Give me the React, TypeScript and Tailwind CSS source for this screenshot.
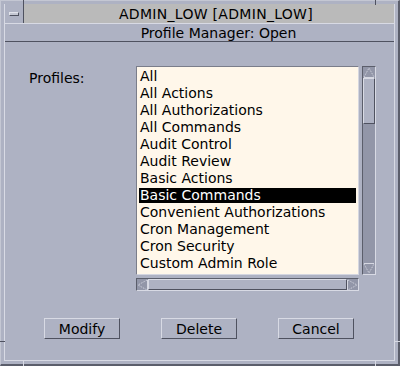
const profiles = [
  "All",
  "All Actions",
  "All Authorizations",
  "All Commands",
  "Audit Control",
  "Audit Review",
  "Basic Actions",
  "Basic Commands",
  "Convenient Authorizations",
  "Cron Management",
  "Cron Security",
  "Custom Admin Role",
];

const selected = "Basic Commands";

function ArrowUp() {
  return (
    <svg width="12" height="11" viewBox="0 0 12 11" className="block">
      <polyline points="1,10 6,1 11,10" fill="none" stroke="#d6d8e2" strokeWidth="1" strokeDasharray="1 1" />
      <line x1="1" y1="10.5" x2="11" y2="10.5" stroke="#d6d8e2" strokeWidth="1" />
    </svg>
  );
}

function ArrowDown() {
  return (
    <svg width="12" height="11" viewBox="0 0 12 11" className="block">
      <line x1="1" y1="0.5" x2="11" y2="0.5" stroke="#d6d8e2" strokeWidth="1" />
      <polyline points="1,1 6,10 11,1" fill="none" stroke="#d6d8e2" strokeWidth="1" strokeDasharray="1 1" />
    </svg>
  );
}

function ArrowLeft() {
  return (
    <svg width="11" height="12" viewBox="0 0 11 12" className="block">
      <polyline points="10,1 1,6 10,11" fill="none" stroke="#d6d8e2" strokeWidth="1" strokeDasharray="1 1" />
      <line x1="10.5" y1="1" x2="10.5" y2="11" stroke="#d6d8e2" strokeWidth="1" />
    </svg>
  );
}

function ArrowRight() {
  return (
    <svg width="11" height="12" viewBox="0 0 11 12" className="block">
      <line x1="0.5" y1="1" x2="0.5" y2="11" stroke="#d6d8e2" strokeWidth="1" />
      <polyline points="1,1 10,6 1,11" fill="none" stroke="#d6d8e2" strokeWidth="1" strokeDasharray="1 1" />
    </svg>
  );
}

function Button({ label }: { label: string }) {
  return (
    <button className="w-[76px] h-[21px] flex items-center justify-center border border-t-[#d8dae4] border-l-[#d8dae4] border-b-[#4f5260] border-r-[#4f5260] bg-[#aeb2c3] text-[14px] text-black leading-none">
      {label}
    </button>
  );
}

export default function App() {
  return (
    <div className="w-[400px] h-[366px] bg-[#aeb2c3] font-['DejaVu_Sans',sans-serif] text-black relative border-l border-t border-[#c4c7d3] border-r-2 border-b-2 border-r-[#5b5e6b] border-b-[#5b5e6b] p-[3px]">
      {/* resize corner notches */}
      <span className="absolute left-[22px] top-[-1px] w-px h-[5px] bg-[#4f5260]" />
      <span className="absolute right-[22px] top-[-1px] w-px h-[5px] bg-[#4f5260]" />
      <span className="absolute left-[22px] bottom-[-2px] w-px h-[5px] bg-[#d8dae4]" />
      <span className="absolute right-[22px] bottom-[-2px] w-px h-[5px] bg-[#d8dae4]" />
      <span className="absolute left-[-1px] bottom-[22px] h-px w-[5px] bg-[#4f5260]" />
      <span className="absolute right-[-2px] bottom-[22px] h-px w-[5px] bg-[#d8dae4]" />

      <div className="h-full flex flex-col border-l border-b border-r border-[#d8dae4]">
        {/* title bar */}
        <div className="flex h-[20px] border-b border-[#d8dae4]">
          <div className="w-[19px] h-full bg-[#aeb2c3] border-r border-[#4f5260] flex items-center justify-center">
            <span className="w-[10px] h-[4px] bg-[#c4c7d3] border-t border-l border-[#e2e4ec] border-b border-r border-b-[#4f5260] border-r-[#4f5260]" />
          </div>
          <div className="flex-1 bg-[#bababa] flex items-center justify-center pl-[14px] text-[14px] leading-none tracking-[0.3px]">
            ADMIN_LOW [ADMIN_LOW]
          </div>
        </div>

        {/* subtitle */}
        <div className="h-[18px] flex items-center justify-center pl-[38px] text-[14px] leading-none border-b border-[#4f5260]">
          Profile Manager: Open
        </div>

        {/* content */}
        <div className="flex pt-[24px] pl-[24px]">
          <div className="w-[107px] shrink-0 pt-[5px] text-[14px] leading-none">Profiles:</div>
          <div className="flex flex-col">
            <div className="flex gap-[3px]">
              <div className="w-[223px] h-[209px] bg-[#fff7ea] border border-t-[#7a7d8a] border-l-[#7a7d8a] border-b-[#d4d6e0] border-r-[#d4d6e0] px-[2px] pt-[2px] flex flex-col gap-[2px] overflow-hidden">
                {profiles.map((p) => (
                  <div
                    key={p}
                    className={
                      p === selected
                        ? "h-[15px] shrink-0 pl-px bg-black text-white text-[14px] leading-[15px] whitespace-nowrap"
                        : "h-[15px] shrink-0 pl-px text-black text-[14px] leading-[15px] whitespace-nowrap"
                    }
                  >
                    {p}
                  </div>
                ))}
              </div>
              <div className="w-[14px] h-[209px] bg-[#9296a8] border border-t-[#5b5e6b] border-l-[#5b5e6b] border-b-[#d8dae4] border-r-[#d8dae4] flex flex-col">
                <ArrowUp />
                <div className="h-[46px] bg-[#aeb2c3] border border-t-[#d8dae4] border-l-[#d8dae4] border-b-[#4f5260] border-r-[#4f5260]" />
                <div className="flex-1" />
                <ArrowDown />
              </div>
            </div>
            <div className="mt-[3px] w-[223px] h-[13px] bg-[#9296a8] border border-t-[#5b5e6b] border-l-[#5b5e6b] border-b-[#d8dae4] border-r-[#d8dae4] flex">
              <ArrowLeft />
              <div className="flex-1 bg-[#aeb2c3] border border-t-[#d8dae4] border-l-[#d8dae4] border-b-[#4f5260] border-r-[#4f5260]" />
              <ArrowRight />
            </div>
          </div>
        </div>

        {/* buttons */}
        <div className="flex justify-center gap-[41px] mt-[27px] pr-px">
          <Button label="Modify" />
          <Button label="Delete" />
          <Button label="Cancel" />
        </div>
      </div>
    </div>
  );
}
